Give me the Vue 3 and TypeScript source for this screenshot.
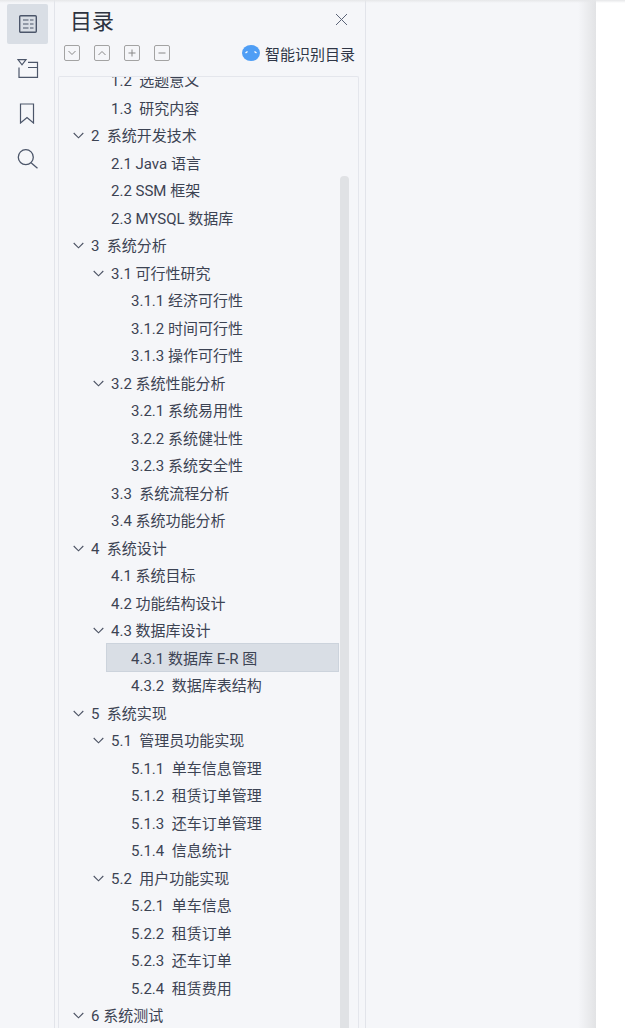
<script setup lang="ts">
interface Row { text: string; level: number; open?: boolean; active?: boolean }
const rows: Row[] = [
  { text: '1.2  选题意义', level: 2 },
  { text: '1.3  研究内容', level: 2 },
  { text: '2  系统开发技术', level: 1, open: true },
  { text: '2.1 Java 语言', level: 2 },
  { text: '2.2 SSM 框架', level: 2 },
  { text: '2.3 MYSQL 数据库', level: 2 },
  { text: '3  系统分析', level: 1, open: true },
  { text: '3.1 可行性研究', level: 2, open: true },
  { text: '3.1.1 经济可行性', level: 3 },
  { text: '3.1.2 时间可行性', level: 3 },
  { text: '3.1.3 操作可行性', level: 3 },
  { text: '3.2 系统性能分析', level: 2, open: true },
  { text: '3.2.1 系统易用性', level: 3 },
  { text: '3.2.2 系统健壮性', level: 3 },
  { text: '3.2.3 系统安全性', level: 3 },
  { text: '3.3  系统流程分析', level: 2 },
  { text: '3.4 系统功能分析', level: 2 },
  { text: '4  系统设计', level: 1, open: true },
  { text: '4.1 系统目标', level: 2 },
  { text: '4.2 功能结构设计', level: 2 },
  { text: '4.3 数据库设计', level: 2, open: true },
  { text: '4.3.1 数据库 E-R 图', level: 3, active: true },
  { text: '4.3.2  数据库表结构', level: 3 },
  { text: '5  系统实现', level: 1, open: true },
  { text: '5.1  管理员功能实现', level: 2, open: true },
  { text: '5.1.1  单车信息管理', level: 3 },
  { text: '5.1.2  租赁订单管理', level: 3 },
  { text: '5.1.3  还车订单管理', level: 3 },
  { text: '5.1.4  信息统计', level: 3 },
  { text: '5.2  用户功能实现', level: 2, open: true },
  { text: '5.2.1  单车信息', level: 3 },
  { text: '5.2.2  租赁订单', level: 3 },
  { text: '5.2.3  还车订单', level: 3 },
  { text: '5.2.4  租赁费用', level: 3 },
  { text: '6 系统测试', level: 1, open: true },
]
</script>

<template>
  <div class="page">
    <nav class="rail">
      <button class="rail-btn on">
        <svg width="20" height="20" viewBox="0 0 20 20" fill="none" stroke="#4c566a" stroke-width="1.4">
          <rect x="1.7" y="1.7" width="16.6" height="16.6" rx="1" />
          <path d="M5 6h5.500M5 10h5.500M5 14h5.500M12 6h3.500M12 10h3.500M12 14h3.500" stroke-width="1.200" />
        </svg>
      </button>
      <button class="rail-btn">
        <svg width="22" height="22" viewBox="0 0 22 22" fill="none" stroke="#4c566a" stroke-width="1.2">
          <path d="M1 1.600h8L5 6.800zM11 4.400h9.500V19.400H2V9.500M11 9.500h9.500" />
        </svg>
      </button>
      <button class="rail-btn">
        <svg width="20" height="22" viewBox="0 0 20 22" fill="none" stroke="#4c566a" stroke-width="1.2">
          <path d="M2.500 2h13v19l-6.500-5.500-6.500 5.500z" />
        </svg>
      </button>
      <button class="rail-btn">
        <svg width="22" height="22" viewBox="0 0 22 22" fill="none" stroke="#4c566a" stroke-width="1.3">
          <circle cx="8.800" cy="10.200" r="7.500" />
          <path d="M14.300 16l6.200 5.200" />
        </svg>
      </button>
    </nav>

    <section class="panel">
      <header class="title-row">
        <h1 class="title">目录</h1>
        <svg class="close" width="13" height="13" viewBox="0 0 13 13" stroke="#5b6478" stroke-width="1">
          <path d="M1 1l11 11M12 1L1 12" />
        </svg>
      </header>
      <div class="tools">
        <span class="tool"><svg width="10" height="10" viewBox="0 0 10 10" fill="none" stroke="#888"><path d="M1.500 3l3.500 3.500L8.500 3" /></svg></span>
        <span class="tool"><svg width="10" height="10" viewBox="0 0 10 10" fill="none" stroke="#888"><path d="M1.500 7L5 3.500 8.500 7" /></svg></span>
        <span class="tool"><svg width="10" height="10" viewBox="0 0 10 10" fill="none" stroke="#888"><path d="M1.500 5h7M5 1.500v7" /></svg></span>
        <span class="tool"><svg width="10" height="10" viewBox="0 0 10 10" fill="none" stroke="#888"><path d="M1.500 5h7" /></svg></span>
        <span class="smart">
          <svg width="18" height="16" viewBox="0 0 18 16">
            <ellipse cx="9" cy="8" rx="9" ry="8" fill="#4f9ef5" />
            <path d="M3.500 8l2-1.500M12.500 6.500l2 1.500" stroke="#fff" stroke-width="1.300" fill="none" />
          </svg>
          智能识别目录
        </span>
      </div>
      <div class="outline">
        <div class="rows">
          <div v-for="row in rows" :key="row.text" class="row" :class="['lv' + row.level, { active: row.active }]">
            <svg v-if="row.open" class="chev" width="11" height="7" viewBox="0 0 11 7" fill="none" stroke="#4c5364" stroke-width="1.100">
              <path d="M.7 1l4.800 4.800L10.300 1" />
            </svg>
            <span class="label">{{ row.text }}</span>
          </div>
        </div>
        <div class="thumb"></div>
      </div>
    </section>

    <section class="viewer"></section>
  </div>
</template>

<style>
html, body { margin: 0; background: #fff; overflow: hidden; }
</style>

<style scoped>
.page {
  position: relative;
  display: flex;
  width: 625px;
  height: 1028px;
  overflow: hidden;
  background: #fff;
  font-family: Roboto, "Noto Sans CJK SC", sans-serif;
  color: #3c4353;
}
.page::after {
  content: "";
  position: absolute;
  inset: 0 0 auto 0;
  height: 3px;
  background: linear-gradient(#e6e7e9, rgba(240, 241, 243, 0));
}
.rail {
  flex: none;
  box-sizing: border-box;
  width: 55px;
  padding: 4px 0 0 7px;
  display: flex;
  flex-direction: column;
  gap: 4.6px;
  background: #f5f6f9;
  border-right: 1px solid #e2e4ea;
}
.rail-btn {
  display: flex;
  align-items: center;
  justify-content: center;
  width: 41px;
  height: 40px;
  padding: 0;
  border: 0;
  border-radius: 2px;
  background: transparent;
}
.rail-btn.on { background: #d9dee5; }
.panel {
  flex: none;
  box-sizing: border-box;
  width: 311px;
  padding: 0 6px 0 3px;
  display: flex;
  flex-direction: column;
  background: #f5f6f9;
  border-right: 1px solid #e2e4ea;
}
.title-row {
  display: flex;
  align-items: center;
  justify-content: space-between;
  height: 43px;
  padding: 0 11px 0 12px;
}
.close { margin-top: -4px; }
.title {
  margin: 0;
  font-size: 22px;
  font-weight: 400;
  line-height: 43px;
  color: #2d3340;
}
.tools {
  display: flex;
  align-items: center;
  height: 20px;
  margin-bottom: 13px;
  padding-left: 6px;
  gap: 14px;
}
.tool {
  box-sizing: border-box;
  display: flex;
  align-items: center;
  justify-content: center;
  width: 16px;
  height: 16px;
  border: 1.5px solid #a3a3a3;
  border-radius: 2px;
}
.smart {
  margin-left: auto;
  display: flex;
  align-items: center;
  gap: 5px;
  font-size: 15px;
  color: #2f3646;
  margin-right: 4px;
}
.outline {
  position: relative;
  flex: 1;
  box-sizing: border-box;
  min-height: 0;
  overflow: hidden;
  border: 1px solid #e4e6ec;
  border-bottom: 0;
  border-radius: 2px 2px 0 0;
}
.rows {
  margin-top: -11px;
  width: 281px;
}
.row {
  position: relative;
  box-sizing: border-box;
  height: 27.5px;
  display: flex;
  align-items: center;
  font-size: 15px;
  white-space: pre;
}
.lv1 { padding-left: 32px; }
.lv2 { padding-left: 52px; }
.lv3 { padding-left: 72px; }
.chev { position: absolute; top: 11px; }
.lv1 .chev { left: 14px; }
.lv2 .chev { left: 34px; }
.row.active {
  margin: 0 2px 0 48px;
  padding-left: 24px;
  background: #d9dee5;
  outline: 1px solid #ccd3dc;
}
.thumb {
  position: absolute;
  left: 281px;
  top: 99px;
  bottom: 0;
  width: 9px;
  border-radius: 4px 4px 0 0;
  background: #e0e2e5;
}
.viewer {
  flex: none;
  width: 230px;
  height: 100%;
  background: linear-gradient(90deg, #f5f6f9 0, #f5f6f9 212px, #e2e3e5 230px);
}
</style>
